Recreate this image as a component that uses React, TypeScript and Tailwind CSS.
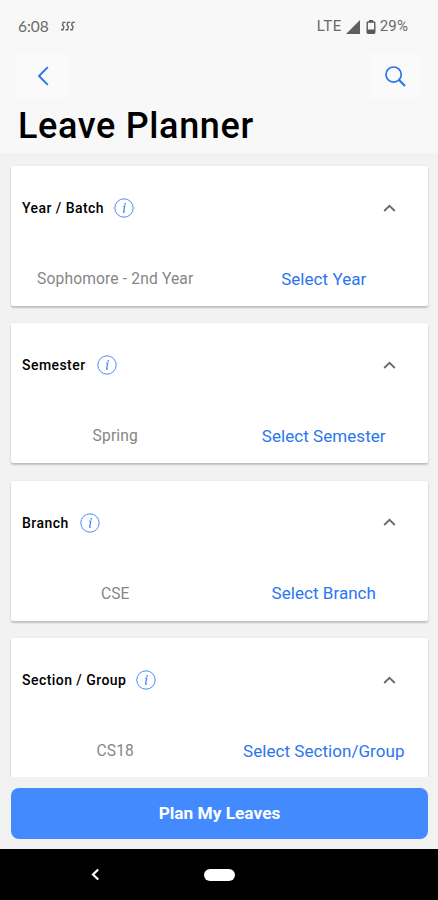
import { useState } from "react";

type PlannerField = {
  label: string;
  value: string;
  action: string;
  labelClass: string;
};

const fields: PlannerField[] = [
  { label: "Year / Batch", value: "Sophomore - 2nd Year", action: "Select Year", labelClass: "w-[81px]" },
  { label: "Semester", value: "Spring", action: "Select Semester", labelClass: "w-[64px]" },
  { label: "Branch", value: "CSE", action: "Select Branch", labelClass: "w-[47px]" },
  { label: "Section / Group", value: "CS18", action: "Select Section/Group", labelClass: "w-[103px]" },
];

function StatusBar() {
  return (
    <div className="flex h-[53px] items-center justify-between pl-[18px] pr-[30px] text-[#6a6a6a]">
      <div className="flex items-center gap-[11px]">
        <span className="font-['Lato',sans-serif] text-[15.5px] leading-none">6:08</span>
        <svg width="16" height="11" viewBox="0 0 17 12" fill="none" stroke="#666" strokeWidth="1.5">
          <path d="M6 1.5H3.2L2.5 4.4L4 6.4L3 9.5H0.8" />
          <path d="M11 1.5H8.2L7.5 4.4L9 6.4L8 9.5H5.8" />
          <path d="M16 1.5H13.2L12.5 4.4L14 6.4L13 9.5H10.8" />
        </svg>
      </div>
      <div className="flex items-center font-['Roboto',sans-serif] text-[15px] leading-none">
        <span className="tracking-[0.5px]">LTE</span>
        <svg className="ml-[4px]" width="14" height="14" viewBox="0 0 14 14" fill="#5f5f5f">
          <path d="M14 0V14H0Z" />
        </svg>
        <svg className="ml-[6px]" width="10" height="14" viewBox="0 0 10 14">
          <path d="M3 0H7V2H3Z" fill="#5a5a5a" />
          <rect x="1.2" y="2" width="7.6" height="11.3" rx="1" fill="none" stroke="#5a5a5a" strokeWidth="1.4" />
          <path d="M1 9.5H9V13H1Z" fill="#5a5a5a" />
        </svg>
        <span className="ml-[4px] tracking-[0.1px]">29%</span>
      </div>
    </div>
  );
}

function InfoIcon() {
  return (
    <svg width="20" height="20" viewBox="0 0 20 20" fill="none" stroke="#4a8af8">
      <circle cx="10" cy="10" r="9.2" strokeWidth="1" />
      <path d="M9.2 8.2H10.7L9.6 14.2H10.8" strokeWidth="1.3" />
      <circle cx="11.2" cy="5.8" r="0.9" fill="#4a8af8" stroke="none" />
    </svg>
  );
}

function FieldCard({ field }: { field: PlannerField }) {
  const [open, setOpen] = useState(true);

  return (
    <section className="h-[140px] shrink-0 rounded-[2px] bg-white shadow-[0_2px_2px_rgba(0,0,0,0.2),0_0_2px_rgba(0,0,0,0.08)]">
      <div className="flex h-[84px] items-center pl-[11px] pr-[32px]">
        <h2 className={`${field.labelClass} whitespace-nowrap text-[14px] font-medium leading-5 tracking-[0.45px] text-black`}>
          {field.label}
        </h2>
        <button type="button" aria-label="Info" className="ml-[11px]">
          <InfoIcon />
        </button>
        <button type="button" aria-label="Toggle" className="ml-auto" onClick={() => setOpen(!open)}>
          <svg width="13" height="9" viewBox="0 0 13 9" fill="none" stroke="#6a6a6a" strokeWidth="1.8">
            <path d={open ? "M1.2 7L6.5 1.8L11.8 7" : "M1.2 1.8L6.5 7L11.8 1.8"} />
          </svg>
        </button>
      </div>
      {open && (
        <div className="grid h-[56px] grid-cols-2 text-center leading-[57px]">
          <span className="pt-px text-[15.6px] tracking-[0.15px] text-[#868686]">{field.value}</span>
          <button type="button" className="whitespace-nowrap text-[17px] tracking-[0.05px] text-[#2a76ee]">
            {field.action}
          </button>
        </div>
      )}
    </section>
  );
}

export default function App() {
  return (
    <div className="flex h-[900px] w-[438px] flex-col overflow-hidden bg-[#f2f2f2] font-['Roboto',sans-serif]">
      <header className="h-[153px] shrink-0 bg-[#f8f8f8]">
        <StatusBar />
        <div className="flex h-[46px] justify-between px-[17px]">
          <button type="button" aria-label="Back" className="flex h-[46px] w-[51px] items-center justify-center bg-[#fafafa]">
            <svg width="12" height="20" viewBox="0 0 12 20" fill="none" stroke="#2b74e8" strokeWidth="1.9">
              <path d="M10.8 1.2L2 10L10.8 18.8" />
            </svg>
          </button>
          <button type="button" aria-label="Search" className="flex h-[46px] w-[51px] items-center justify-center bg-[#fafafa]">
            <svg width="21" height="21" viewBox="0 0 21 21" fill="none" stroke="#2b74e8" strokeWidth="1.7">
              <circle cx="8.6" cy="8.6" r="7.6" />
              <path d="M14 14L20 20" strokeWidth="2.1" />
            </svg>
          </button>
        </div>
        <h1 className="whitespace-nowrap pl-[18px] text-[36px] font-medium leading-[54px] tracking-[0.65px] text-black">
          Leave Planner
        </h1>
      </header>

      <main className="flex h-[624px] shrink-0 flex-col gap-[17.4px] overflow-hidden pl-[11px] pr-[10px] pt-[13px]">
        {fields.map((field) => (
          <FieldCard key={field.label} field={field} />
        ))}
      </main>

      <div className="h-[72px] shrink-0 pl-[11px] pr-[10px] pt-[11px]">
        <button
          type="button"
          className="h-[51px] w-full rounded-[8px] bg-[#448aff] text-[17.3px] font-bold text-white"
        >
          Plan My Leaves
        </button>
      </div>

      <nav className="grid h-[51px] shrink-0 grid-cols-[190px_58px_190px] items-center justify-items-center bg-black">
        <svg width="9" height="13" viewBox="0 0 9 13" fill="none" stroke="#fff" strokeWidth="2.2">
          <path d="M7.2 1.5L2 6.5L7.2 11.5" />
        </svg>
        <span className="h-[12px] w-[31px] rounded-full bg-white" />
      </nav>
    </div>
  );
}
